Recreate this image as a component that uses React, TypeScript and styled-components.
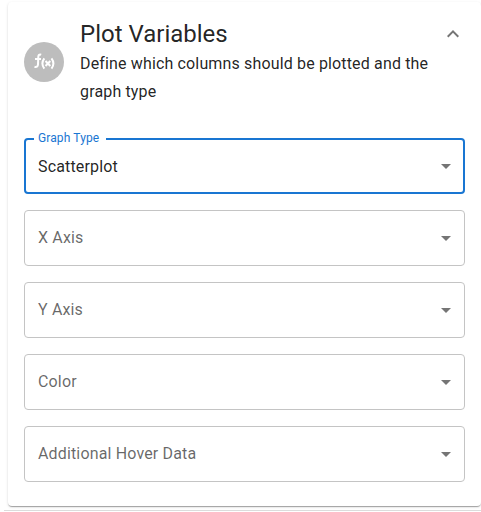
import React from "react";
import styled, { createGlobalStyle } from "styled-components";

const GlobalStyle = createGlobalStyle`
  *, *::before, *::after { box-sizing: border-box; }
  body {
    margin: 0;
    background: #fff;
    overflow: hidden;
    color: rgba(0, 0, 0, 0.87);
    font-family: Roboto, "Liberation Sans", sans-serif;
    font-size: 16px;
    letter-spacing: 0.15008px;
  }
`;

const Page = styled.main`
  height: 512px;
  padding: 2px 0 0 4px;
`;

const Card = styled.section`
  height: 504px;
  margin-left: 4px;
  padding: 16px;
  border-radius: 4px;
  background: #fff;
  box-shadow: 0 2px 1px -1px rgba(0, 0, 0, 0.2), 0 1px 1px 0 rgba(0, 0, 0, 0.14),
    0 1px 3px 0 rgba(0, 0, 0, 0.12);
`;

const NextDivider = styled.div`
  height: 1px;
  margin-top: 4px;
  background: #dcdcdc;
`;

const Header = styled.header`
  display: flex;
  align-items: center;
  height: 88px;
`;

const Avatar = styled.div`
  display: flex;
  flex: none;
  align-items: center;
  justify-content: center;
  width: 40px;
  height: 40px;
  margin-right: 16px;
  border-radius: 50%;
  background: #bdbdbd;
`;

const Heading = styled.div`
  flex: 1;
`;

const Title = styled.h2`
  margin: 0;
  font-size: 24px;
  font-weight: 400;
  line-height: 32px;
  letter-spacing: 0;
`;

const Description = styled.p`
  width: 356px;
  margin: 0;
  line-height: 28px;
`;

const Toggle = styled.button`
  display: flex;
  align-self: flex-start;
  margin: 4px 0 0 -24px;
  padding: 0;
  border: 0;
  background: none;
  color: #757575;
`;

const Fields = styled.div`
  display: grid;
  gap: 16px;
  margin-top: 32px;
`;

const Field = styled.div<{ $active?: boolean }>`
  position: relative;
  display: flex;
  align-items: center;
  justify-content: space-between;
  width: 441px;
  height: 56px;
  padding: 0 ${(p) => (p.$active ? 5 : 6)}px 0 ${(p) => (p.$active ? 12 : 13)}px;
  border: ${(p) => (p.$active ? "2px solid #1976d2" : "1px solid #c4c4c4")};
  border-radius: 4px;
  color: ${(p) => (p.$active ? "rgba(0, 0, 0, 0.87)" : "rgba(0, 0, 0, 0.6)")};
  line-height: 23px;
`;

const FieldText = styled.span<{ $filled: boolean }>`
  padding-bottom: ${(p) => (p.$filled ? 0 : 2)}px;
`;

const FloatingLabel = styled.span`
  position: absolute;
  top: -11px;
  left: 8px;
  padding: 0 7px 0 4px;
  background: #fff;
  color: #1976d2;
  font-size: 12px;
  line-height: 18px;
  letter-spacing: 0.11px;
  white-space: nowrap;
`;

const Arrow = styled.svg`
  width: 24px;
  height: 24px;
  fill: #757575;
`;

const FunctionIcon = () => (
  <svg width="24" height="24" viewBox="0 0 24 24" fill="none" stroke="#fff" strokeWidth="2">
    <path d="M9.2 4.8C7.3 4.2 6.4 5 6.3 6.8L6 14.4C5.9 16.6 4.5 17.4 2.5 16.7M3 9H9" />
    <path d="M12.3 8.3Q8.5 13.4 12.3 18.6M19.5 8.3Q23.3 13.4 19.5 18.6" />
    <path d="M13.5 11L18.3 16M18.3 11L13.5 16" />
  </svg>
);

const fields = [
  { label: "Graph Type", value: "Scatterplot" },
  { label: "X Axis" },
  { label: "Y Axis" },
  { label: "Color" },
  { label: "Additional Hover Data" },
];

export default function App() {
  return (
    <>
      <GlobalStyle />
      <Page>
        <Card>
          <Header>
            <Avatar>
              <FunctionIcon />
            </Avatar>
            <Heading>
              <Title>Plot Variables</Title>
              <Description>Define which columns should be plotted and the graph type</Description>
            </Heading>
            <Toggle aria-label="Collapse">
              <svg width="24" height="24" viewBox="0 0 24 24" fill="currentColor">
                <path d="m12 8-6 6 1.41 1.41L12 10.83l4.59 4.58L18 14z" />
              </svg>
            </Toggle>
          </Header>
          <Fields>
            {fields.map(({ label, value }) => (
              <Field key={label} $active={!!value}>
                {value && <FloatingLabel>{label}</FloatingLabel>}
                <FieldText $filled={!!value}>{value ?? label}</FieldText>
                <Arrow viewBox="0 0 24 24">
                  <path d="m7 10 5 5 5-5z" />
                </Arrow>
              </Field>
            ))}
          </Fields>
        </Card>
        <NextDivider />
      </Page>
    </>
  );
}
